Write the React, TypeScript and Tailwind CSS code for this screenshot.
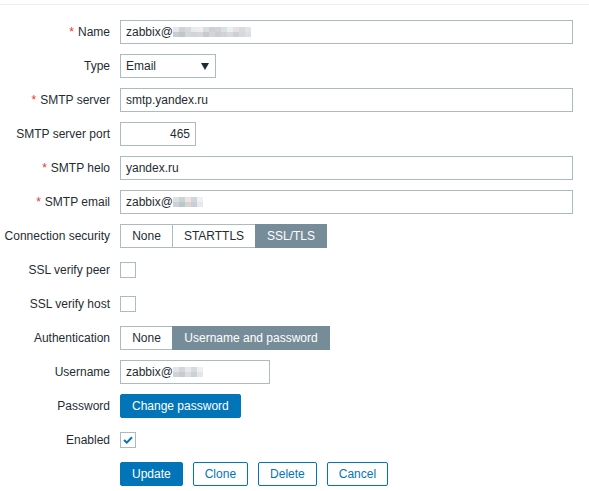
import React from 'react';

// Mosaic blocks used for masked parts of addresses
const Mosaic: React.FC<{ cells: string[][] }> = ({ cells }) => (
  <span className="inline-flex flex-col align-middle">
    {cells.map((row, r) => (
      <span key={r} className="flex">
        {row.map((c, i) => (
          <span key={i} className="block w-[6px] h-[5px]" style={{ backgroundColor: c }} />
        ))}
      </span>
    ))}
  </span>
);

const nameMask = [
  ['#e3e6ea', '#cfd3d8', '#d6dadf', '#e8ecef', '#f1ecea', '#d9dde2', '#cdd2d7', '#d5d1d4', '#dcdfe3', '#eceff1', '#e6e0e2', '#d8dbe0', '#e2e5e8'],
  ['#c8cdd2', '#c2c6cb', '#d3d6da', '#cfd4d9', '#d4d8dc', '#c6cacf', '#d1d4d8', '#cbcfd4', '#d0d3d7', '#d8dbde', '#cdd1d5', '#d5d8dc', '#dde0e3'],
];
const emailMask = [
  ['#dcdfe2', '#c9d3d8', '#ebe4df', '#cfd6de', '#eef2f5'],
  ['#cdd1d4', '#b9c6cc', '#d8d4d1', '#c9ced6', '#e6e9ec'],
];
const userMask = [
  ['#e1e3e6', '#d2d6da', '#e6e8ea', '#d8dbde', '#eef0f2'],
  ['#cfd3d6', '#c7cbcf', '#dadcdf', '#cdd0d4', '#e4e7e9'],
];

const Label: React.FC<{ text: string; required?: boolean }> = ({ text, required }) => (
  <div className="flex items-center justify-end h-6 whitespace-nowrap">
    {required && <span className="text-[#e33734] mr-[4px]">*</span>}
    {text}
  </div>
);

const TextBox: React.FC<{ width: string; children: React.ReactNode; right?: boolean }> = ({ width, children, right }) => (
  <div
    className={`h-6 border border-[#acbbc2] bg-white flex items-center px-[5px] ${right ? 'justify-end' : ''} ${width}`}
  >
    {children}
  </div>
);

const Segmented: React.FC<{ items: { label: string; w: string }[]; active: number }> = ({ items, active }) => (
  <div className="flex h-6">
    {items.map((it, i) => (
      <div
        key={it.label}
        className={`flex items-center justify-center border ${it.w} ${i > 0 ? '-ml-px' : ''} ${
          i === active ? 'bg-[#768d99] border-[#768d99] text-white' : 'bg-white border-[#acbbc2] text-[#1f2c33]'
        }`}
      >
        {it.label}
      </div>
    ))}
  </div>
);

const Checkbox: React.FC<{ checked?: boolean }> = ({ checked }) => (
  <div className="h-6 flex items-center">
    <div className="w-4 h-4 border border-[#acbbc2] bg-white flex items-center justify-center">
      {checked && (
        <svg width="10" height="8" viewBox="0 0 10 8">
          <path d="M1 4 L3.8 6.6 L9 1.2" fill="none" stroke="#0275b8" strokeWidth="2" />
        </svg>
      )}
    </div>
  </div>
);

const primaryBtn = 'h-6 px-[11px] bg-[#0275b8] border border-[#0275b8] text-white rounded-[2px]';
const outlineBtn = 'h-6 px-[11px] bg-white border border-[#0275b8] text-[#0275b8] rounded-[2px]';

const App: React.FC = () => {
  return (
    <div
      className="w-[589px] h-[491px] bg-white text-[12px] text-[#1f2c33] overflow-hidden"
      style={{ fontFamily: '"Liberation Sans", Arial, sans-serif' }}
    >
      <div className="mt-[4px] border-t border-[#ebeef0] pt-[15px] pr-[16px]">
        <div className="grid grid-cols-[110px_1fr] gap-x-[10px] gap-y-[10px]">
          <Label text="Name" required />
          <TextBox width="w-[453px]">
            zabbix@
            <Mosaic cells={nameMask} />
          </TextBox>

          <Label text="Type" />
          <div className="h-6 w-[96px] border border-[#acbbc2] bg-white flex items-center justify-between pl-[5px] pr-[6px]">
            Email
            <svg width="8" height="7" viewBox="0 0 8 7">
              <path d="M0 0 H8 L4 7 Z" fill="#1f2c33" />
            </svg>
          </div>

          <Label text="SMTP server" required />
          <TextBox width="w-[453px]">smtp.yandex.ru</TextBox>

          <Label text="SMTP server port" />
          <TextBox width="w-[76px]" right>
            465
          </TextBox>

          <Label text="SMTP helo" required />
          <TextBox width="w-[453px]">yandex.ru</TextBox>

          <Label text="SMTP email" required />
          <TextBox width="w-[453px]">
            zabbix@
            <Mosaic cells={emailMask} />
          </TextBox>

          <Label text="Connection security" />
          <Segmented
            active={2}
            items={[
              { label: 'None', w: 'w-[53px]' },
              { label: 'STARTTLS', w: 'w-[84px]' },
              { label: 'SSL/TLS', w: 'w-[72px]' },
            ]}
          />

          <Label text="SSL verify peer" />
          <Checkbox />

          <Label text="SSL verify host" />
          <Checkbox />

          <Label text="Authentication" />
          <Segmented
            active={1}
            items={[
              { label: 'None', w: 'w-[53px]' },
              { label: 'Username and password', w: 'w-[158px]' },
            ]}
          />

          <Label text="Username" />
          <TextBox width="w-[150px]">
            zabbix@
            <Mosaic cells={userMask} />
          </TextBox>

          <Label text="Password" />
          <div className="flex">
            <button className={primaryBtn}>Change password</button>
          </div>

          <Label text="Enabled" />
          <Checkbox checked />

          <div />
          <div className="flex gap-[10px]">
            <button className={primaryBtn}>Update</button>
            <button className={outlineBtn}>Clone</button>
            <button className={outlineBtn}>Delete</button>
            <button className={outlineBtn}>Cancel</button>
          </div>
        </div>
      </div>
    </div>
  );
};

export default App;
